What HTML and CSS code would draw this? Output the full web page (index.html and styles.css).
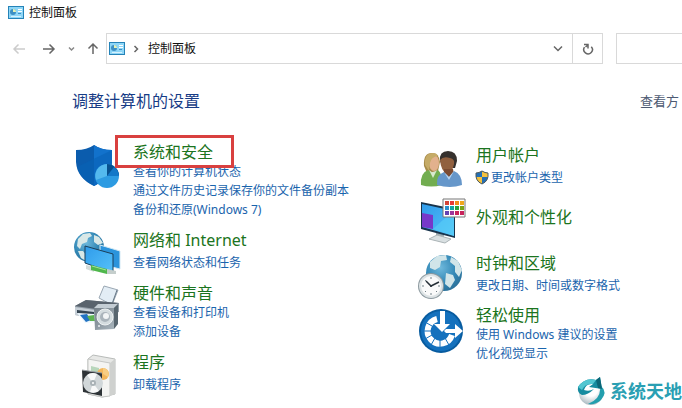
FILE: index.html
```html
<!DOCTYPE html>
<html lang="zh-CN">
<head>
<meta charset="utf-8">
<title>控制面板</title>
<link rel="stylesheet" href="styles.css">
</head>
<body>
<svg class="defs" aria-hidden="true">
  <defs>
    <linearGradient id="screen" x1="0" y1="0" x2="1" y2="1"><stop offset="0" stop-color="#2f9bea"/><stop offset="1" stop-color="#56c2fa"/></linearGradient>
    <radialGradient id="globe" cx=".4" cy=".35" r=".7"><stop offset="0" stop-color="#6fb9dc"/><stop offset=".6" stop-color="#3388b6"/><stop offset="1" stop-color="#2b6f98"/></radialGradient>
    <linearGradient id="metal" x1="0" y1="0" x2="1" y2="1"><stop offset="0" stop-color="#747f88"/><stop offset="1" stop-color="#a9b5bd"/></linearGradient>
    <radialGradient id="ball" cx=".5" cy=".35" r=".7"><stop offset=".4" stop-color="#fff"/><stop offset="1" stop-color="#9fb0b8"/></radialGradient>
    <symbol id="panel" viewBox="0 0 16 13">
      <rect x=".5" y=".5" width="15" height="12" fill="#8ed6f7" stroke="#2583b8"/>
      <circle cx="5" cy="6" r="3" fill="#3d8fc4"/><path d="M5 6V3A3 3 0 0 1 8 6z" fill="#e3f2b8"/>
      <path d="M10 3.500h4M10 5.500h4" stroke="#fff"/><path d="M10 7.500h3" stroke="#3d8fc4"/><path d="M3 10.500h10" stroke="#d8f2fd"/>
    </symbol>
  </defs>
</svg>

<header class="titlebar">
  <svg class="panel-icon"><use href="#panel"/></svg>
  <span>控制面板</span>
</header>

<div class="toolbar">
  <div class="nav-buttons">
    <button class="back" aria-label="后退" disabled><svg width="14" height="12" viewBox="0 0 14 12"><path d="M13 6H2M6.500 1.500L2 6l4.500 4.500"/></svg></button>
    <button class="forward" aria-label="前进"><svg width="14" height="12" viewBox="0 0 14 12"><path d="M1 6h11M7.500 1.500L12 6l-4.500 4.500"/></svg></button>
    <button class="recent" aria-label="最近位置"><svg width="7" height="6" viewBox="0 0 7 6"><path d="M1 1.500l2.500 2.500L6 1.500"/></svg></button>
    <button class="up" aria-label="上移"><svg width="12" height="13" viewBox="0 0 12 13"><path d="M6 12V2M1.500 6.500L6 2l4.500 4.500"/></svg></button>
  </div>
  <nav class="address" aria-label="地址">
    <svg class="panel-icon"><use href="#panel"/></svg>
    <svg class="crumb-arrow" width="6" height="8" viewBox="0 0 6 8"><path d="M1.500 1l3 3-3 3"/></svg>
    <a class="crumb" href="#">控制面板</a>
    <button class="history" aria-label="展开"><svg width="10" height="7" viewBox="0 0 10 7"><path d="M1 1.500l4 4 4-4"/></svg></button>
    <button class="refresh" aria-label="刷新"><svg width="12" height="12" viewBox="0 0 12 12"><path d="M9.300 3.700A4.300 4.300 0 1 1 2.500 4.200M2 1.500h4v4M6 2L3.500 4"/></svg></button>
  </nav>
  <input class="search" type="search" aria-label="搜索控制面板">
</div>

<main>
  <div class="heading-row">
    <h1>调整计算机的设置</h1>
    <span class="view-by">查看方</span>
  </div>

  <div class="categories">
    <div class="column">
      <section class="category">
        <svg class="icon" viewBox="0 0 48 48">
          <path d="M20 3Q13 8 2 8V20Q3 36 20 44Q37 35 38 20V8Q27 8 20 3z" fill="#0b5cad"/>
          <path d="M20 3Q27 8 38 8V20Q37 35 20 44z" fill="#1272cc"/><path d="M3 25L38 8V20Q37 35 20 44Q6 37 3 25z" fill="#0863b5" opacity=".6"/>
          <circle cx="33" cy="34" r="12" fill="#2d9be2"/><path d="M33 34V22A12 12 0 0 0 22 38z" fill="#54b9ee"/><path d="M33 34V22A12 12 0 0 1 45 33z" fill="#07508f"/><path d="M33 34L40 25A12 12 0 0 1 45 34z" fill="#1478c8"/>
        </svg>
        <div class="text">
          <h2><a class="marked" href="#">系统和安全</a></h2>
          <ul><li><a href="#">查看你的计算机状态</a></li><li><a href="#">通过文件历史记录保存你的文件备份副本</a></li><li><a href="#">备份和还原(Windows 7)</a></li></ul>
        </div>
      </section>
      <section class="category single">
        <svg class="icon" viewBox="0 0 48 48">
          <circle cx="15" cy="17" r="15" fill="url(#globe)"/>
          <path d="M4 9l5-5 7-1 2 3-4 2-1 4-5 2-2 5-3-3zM20 5l5 2 4 6-5 2-4-3zM4 21l5 0 4 5-1 5-5-3z" fill="#d9e8e7"/>
          <path d="M26 15l20 6v18l-20-5z" fill="#2b94dc" stroke="#d4eaf5"/><path d="M11 16l28 8v19l-28-10z" fill="url(#screen)" stroke="#1b3f5a"/>
          <path d="M12 35l8 2v5l-8-3z" fill="#d5dcda"/><path d="M17 35l16 4v5l-16-4z" fill="#4fb74c"/><path d="M18 36l14 4" stroke="#a4e39c"/><path d="M33 39l9 2v3l-9 0z" fill="#c5cecc"/>
        </svg>
        <div class="text">
          <h2><a href="#">网络和 Internet</a></h2>
          <ul><li><a href="#">查看网络状态和任务</a></li></ul>
        </div>
      </section>
      <section class="category">
        <svg class="icon" viewBox="0 0 48 48">
          <path d="M25 15L30 3l14 4-6 15z" fill="#e3edf5" stroke="#9aa7b3"/><path d="M43 7l-5 14" stroke="#647584"/>
          <path d="M1 23l11-6 33 3v9l-24 6L1 32z" fill="#929da7"/><path d="M1 23l11-6 33 3-23 6z" fill="#59636d"/><path d="M1 24l20 3v9L1 32z" fill="#c5ced6"/><path d="M3 27l17 2v4L3 30z" fill="#354552"/>
          <path d="M3 30l17 1 2 8-11 1z" fill="#edf7fd"/><path d="M6 32l7-1 4 6-5 2z" fill="#2272c3"/><path d="M13 33l7-1 1 6-5 0z" fill="#5db451"/>
          <path d="M20 25l4-4h20l-4 4z" fill="#c4cdd4"/><path d="M40 25l4-4v20l-4 5z" fill="#58666f"/><path d="M20 25h20v21l-19 1z" fill="url(#metal)"/>
          <circle cx="31" cy="34" r="8" fill="#d4dcdf" stroke="#eef2f3"/><circle cx="31" cy="34" r="5" fill="#aab4bb"/><circle cx="32" cy="33" r="3" fill="#f2f5f6"/><circle cx="25" cy="43" r="1" fill="#e7edef"/>
        </svg>
        <div class="text">
          <h2><a href="#">硬件和声音</a></h2>
          <ul><li><a href="#">查看设备和打印机</a></li><li><a href="#">添加设备</a></li></ul>
        </div>
      </section>
      <section class="category single">
        <svg class="icon" viewBox="0 0 48 48">
          <path d="M14 7l5-4 22 4v35l-13 3-14-3z" fill="#e7e8e6" stroke="#b8bbb9"/><path d="M14 7l22 4v33l-8 1-14-3z" fill="#f4f4f2" stroke="#c5c7c5"/><path d="M36 11l5-4v35l-5 2z" fill="#cfd1cf"/>
          <path d="M17 14l8 2v7l-8-2z" fill="#b8d6bb"/><circle cx="29" cy="22" r="6" fill="#f3b65b"/><path d="M29 16v6l5 3a6 6 0 0 0-5-9z" fill="#f8cd82"/>
          <path d="M8 18l20 3v23L9 40z" fill="#2e3337"/><path d="M8 18l20 3" stroke="#9aa0a3"/>
          <circle cx="19" cy="31" r="10" fill="#d1d7d9"/><path d="M19 31L13 23A10 10 0 0 1 23 22zM19 31l6 8a10 10 0 0 1-9 1z" fill="#f8f9f9"/><circle cx="19" cy="31" r="3" fill="#a9b2b6"/><circle cx="19" cy="31" r="1" fill="#fff"/>
        </svg>
        <div class="text">
          <h2><a href="#">程序</a></h2>
          <ul><li><a href="#">卸载程序</a></li></ul>
        </div>
      </section>
    </div>

    <div class="column right">
      <section class="category single">
        <svg class="icon" viewBox="0 0 48 48">
          <path d="M6 21Q5 8 14 8Q21 8 22 17L20 26L9 28z" fill="#a78b49"/><ellipse cx="16" cy="18" rx="5" ry="8" fill="#e2b18d"/><path d="M7 20Q6 8 15 8Q19 8 20 11Q13 12 12 18L11 26z" fill="#c5ab67"/>
          <path d="M3 40Q2 28 10 25L15 28L20 25Q25 29 24 40Q13 43 3 40z" fill="#72ad50"/><path d="M11 25l4 8 4-8-4 3z" fill="#d9e9ce"/>
          <path d="M22 16Q21 6 30 6Q39 6 39 16L37 23H25z" fill="#36312e"/><path d="M22 15Q25 11 32 13Q37 14 36 19Q34 29 29 29Q23 26 22 15z" fill="#91603f"/><path d="M26 24h9l1 5-6 4-4-4z" fill="#7c4c33"/>
          <path d="M19 40Q18 30 26 27L31 32L36 26Q44 29 44 40Q32 44 19 40z" fill="#6697ca"/><path d="M26 27l5 8 5-9-5 6z" fill="#bad4ee"/>
        </svg>
        <div class="text">
          <h2><a href="#">用户帐户</a></h2>
          <ul><li><a class="elevated" href="#"><svg width="14" height="15" viewBox="0 0 14 15"><path d="M7 1Q4 3 1 3Q0 11 7 14Q14 11 13 3Q10 3 7 1z" fill="#246fb5"/><path d="M7 1Q10 3 13 3V7H7zM7 7v7Q2 12 1 7z" fill="#f4c13d"/><path d="M7 1Q4 3 1 3Q0 11 7 14Q14 11 13 3Q10 3 7 1z" fill="none" stroke="#4e5b5d"/></svg>更改帐户类型</a></li></ul>
        </div>
      </section>
      <section class="category title-only">
        <svg class="icon" viewBox="0 0 48 48">
          <path d="M18 34l8 2v6l-8-1z" fill="#9eabb1"/><path d="M11 42l8-4 14 4-6 4z" fill="#d9e0e2" stroke="#aab3b6"/>
          <path d="M3 5l34 7v29L3 32z" fill="#17334b"/><path d="M4 7l32 7v25L4 30z" fill="url(#screen)"/><path d="M4 16l11 2v14L4 30z" fill="#7738c9"/><path d="M15 32l21-19v26z" fill="#58d1f7" opacity=".6"/>
          <path d="M25 2h22v18H25z" fill="#fff" stroke="#777"/>
          <g stroke-width="4"><path d="M27 6h4" stroke="#d44336"/><path d="M32 6h4" stroke="#e53935"/><path d="M37 6h4" stroke="#f08b16"/><path d="M42 6h4" stroke="#efa51c"/><path d="M27 11h4" stroke="#2b8ecb"/><path d="M32 11h4" stroke="#11a5a0"/><path d="M37 11h4" stroke="#28a23c"/><path d="M42 11h4" stroke="#78a419"/><path d="M27 16h4" stroke="#6542b1"/><path d="M32 16h4" stroke="#9e379c"/><path d="M37 16h4M42 16h4" stroke="#c8245b"/></g>
        </svg>
        <div class="text"><h2><a href="#">外观和个性化</a></h2></div>
      </section>
      <section class="category single">
        <svg class="icon" viewBox="0 0 48 48">
          <circle cx="26" cy="20" r="18" fill="url(#globe)"/><path d="M12 9l7-6 9-1 1 5-6 1-1 6-5 3-5-2zM33 4l7 4 4 9-3 7-4-5 0-6-5-4zM28 20l7 2 2 5-5 8-5-4z" fill="#d1e5e9"/>
          <circle cx="13" cy="33" r="13" fill="#8c999f"/><circle cx="13" cy="33" r="12" fill="#dce2e4"/><circle cx="13" cy="33" r="10" fill="#fafafa"/>
          <path d="M13 24v2M13 40v2M4 33h2M20 33h2M7 27l1 1M18 38l1 1M7 39l1-1" stroke="#718087"/><path d="M8 28l5 5 8-4" fill="none" stroke="#273038" stroke-width="1.500"/><circle cx="13" cy="33" r="1" fill="#273038"/>
        </svg>
        <div class="text">
          <h2><a href="#">时钟和区域</a></h2>
          <ul><li><a href="#">更改日期、时间或数字格式</a></li></ul>
        </div>
      </section>
      <section class="category">
        <svg class="icon" viewBox="0 0 48 48">
          <circle cx="23" cy="26" r="22" fill="#075b9f"/><circle cx="23" cy="26" r="20" fill="#1471bd"/>
          <path d="M19 14A12.500 12.500 0 1 0 34 30" fill="none" stroke="#fff" stroke-width="6"/>
          <path d="M22 34v8M17 33l-4 7M14 30l-7 4M13 26H5M14 21l-7-4M27 33l4 7" stroke="#1471bd" stroke-width="1"/>
          <path d="M22 6h5v13h5l-8 8-8-8h6z" fill="#fff"/><path d="M28 24h9v-5l8 7-8 7v-5h-9l-2-2z" fill="#fff"/>
        </svg>
        <div class="text">
          <h2><a href="#">轻松使用</a></h2>
          <ul><li><a href="#">使用 Windows 建议的设置</a></li><li><a href="#">优化视觉显示</a></li></ul>
        </div>
      </section>
    </div>
  </div>
</main>

<div class="watermark">
  <svg width="32" height="28" viewBox="0 0 32 28">
    <circle cx="15" cy="16" r="12" fill="url(#ball)"/>
    <path d="M2 10Q9 0 20 3L24 0L26 12L13 10L17 7Q10 6 8 13Q13 15 18 12Q12 18 6 18Q1 16 2 10z" fill="#168ca0"/>
    <path d="M2 10Q9 0 20 3L17 7Q9 6 6 13z" fill="#52c6d1"/><path d="M25 9Q32 15 25 23Q20 28 12 27Q24 22 24 13z" fill="#239fae"/><path d="M20 3l4-3 2 12-4-1z" fill="#0b6677"/>
  </svg>
  <span>系统天地</span>
</div>
</body>
</html>
```
FILE: styles.css
```css
* { box-sizing: border-box; }

body {
  position: relative;
  min-height: 100vh;
  margin: 0;
  overflow: hidden;
  background: #fff;
  color: #111;
  font: 12px/19px "Noto Sans", "Noto Sans CJK SC", sans-serif;
}

h1, h2, ul { margin: 0; padding: 0; font-weight: 400; }
ul { list-style: none; }
a { color: inherit; text-decoration: none; white-space: nowrap; }
button { display: grid; place-items: center; padding: 0; border: 0; background: none; }
button path, .crumb-arrow path { fill: none; stroke: #666; stroke-width: 1.5; }

.defs { position: absolute; width: 0; height: 0; }
.panel-icon { flex: none; width: 16px; height: 13px; }

.titlebar { display: flex; align-items: center; gap: 5px; height: 25px; padding-left: 8px; }

.toolbar { display: flex; margin-top: 8px; height: 31px; }
.nav-buttons { display: flex; flex: none; align-items: center; width: 106px; padding-left: 12px; gap: 16px; }
.forward { margin-right: -4px; }
.up { margin-left: -4px; }
.back path { stroke: #ccc; }
.recent path { stroke: #888; }

.address {
  display: flex;
  flex: 1 0 auto;
  align-items: center;
  padding-left: 2px;
  border: 1px solid #d9d9d9;
}
.crumb-arrow { margin: 0 9px 0 8px; }
.history { margin-left: auto; width: 28px; height: 100%; }
.refresh { width: 30px; height: 100%; border-left: 1px solid #d9d9d9; }
.search {
  flex: none;
  width: 80px;
  margin: 0 -14px 0 13px;
  border: 1px solid #d9d9d9;
  border-radius: 0;
}

.heading-row { display: flex; align-items: center; justify-content: space-between; height: 24px; margin: 25px 0 0 72px; }
h1 { color: #173c86; font-size: 16px; line-height: 24px; }
.view-by { margin-right: 3px; color: #4d5a72; font-size: 13px; white-space: nowrap; }

.categories { display: grid; grid-template-columns: 344px 1fr; margin: 29px 0 0 74px; }
.column { display: flex; flex-direction: column; gap: 11px; }
.right { gap: 10px; margin-top: 3px; }
.category { display: flex; align-items: flex-start; gap: 11px; }
.right .category { gap: 10px; }
.icon { flex: none; width: 48px; height: 48px; margin-bottom: -6px; overflow: visible; }
h2 { color: #1b7420; font-size: 16px; line-height: 20px; }
li { height: 19px; color: #1a64ad; }
.single ul { margin-top: 3px; }
.title-only { min-height: 46px; }
.title-only .text { padding-top: 10px; }
.elevated { display: flex; align-items: center; gap: 2px; margin-left: -1px; }

.marked { position: relative; }
.marked::after {
  content: "";
  position: absolute;
  inset: -6px -21px -5px -18px;
  border: 3px solid #d9403f;
}

.watermark {
  position: absolute;
  right: 0;
  bottom: 3px;
  display: flex;
  align-items: center;
  gap: 2px;
  color: #2a9fb3;
  font-size: 18px;
  font-weight: 700;
  line-height: 28px;
}
```
